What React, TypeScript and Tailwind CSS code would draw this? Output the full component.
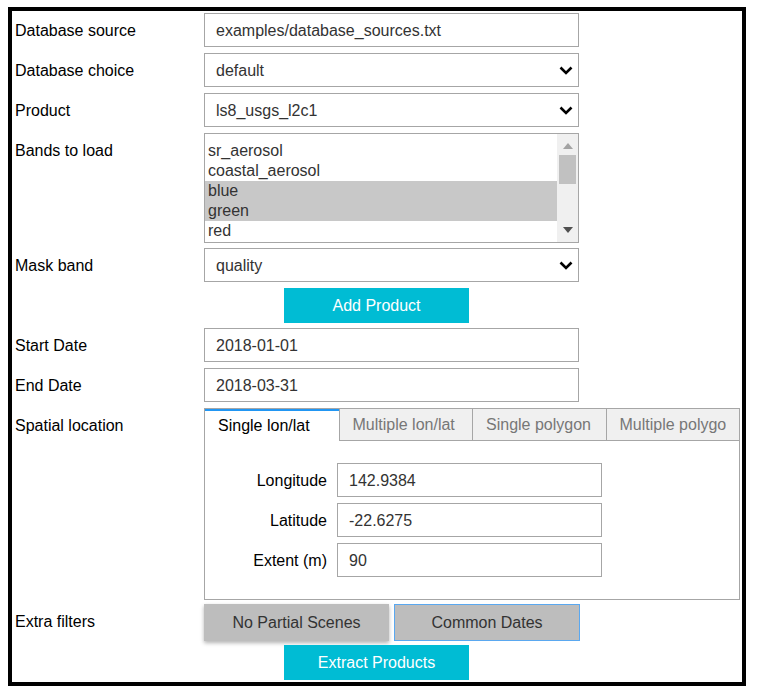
import React from "react";

const font = "font-['Liberation_Sans',Arial,sans-serif]";

function Chevron() {
  return (
    <svg width="14" height="9" viewBox="0 0 14 9" className="shrink-0">
      <path d="M1.5 1.5 L7 7 L12.5 1.5" fill="none" stroke="#000" strokeWidth="2.6" />
    </svg>
  );
}

function Row({ label, className, children }: { label?: string; className?: string; children: React.ReactNode }) {
  return (
    <div className={"flex " + (className ?? "")}>
      <div className="flex h-[34px] w-[189px] shrink-0 items-center pt-[1px] text-black">{label}</div>
      {children}
    </div>
  );
}

function TextBox({ value, width = "w-[375px]" }: { value: string; width?: string }) {
  return (
    <div className={`flex h-[34px] ${width} items-center border border-[#a6a6a6] bg-white pl-[11px] pt-[1px] text-[#333]`}>
      {value}
    </div>
  );
}

function SelectBox({ value }: { value: string }) {
  return (
    <div className="flex h-[34px] w-[375px] items-center justify-between border border-[#a6a6a6] bg-white pl-[11px] pr-[5px] text-[#333]">
      <span className="pt-[1px]">{value}</span>
      <Chevron />
    </div>
  );
}

function CyanButton({ text }: { text: string }) {
  return (
    <div className="ml-[80px] flex h-[35px] w-[185px] items-center justify-center bg-[#00bcd4] text-white">
      {text}
    </div>
  );
}

const bands = [
  { name: "sr_aerosol", sel: false },
  { name: "coastal_aerosol", sel: false },
  { name: "blue", sel: true },
  { name: "green", sel: true },
  { name: "red", sel: false },
];

export default function App() {
  const tabs = ["Single lon/lat", "Multiple lon/lat", "Single polygon", "Multiple polygon"];

  return (
    <div className={`${font} bg-white pl-[8px] pt-[7px] text-[16px] leading-[20px]`}>
      <div className="flex h-[679px] w-[738px] flex-col border-4 border-black pl-[3px] pt-[2px]">
        <Row label="Database source">
          <TextBox value="examples/database_sources.txt" />
        </Row>
        <Row label="Database choice" className="mt-[6px]">
          <SelectBox value="default" />
        </Row>
        <Row label="Product" className="mt-[6px]">
          <SelectBox value="ls8_usgs_l2c1" />
        </Row>

        {/* Bands list */}
        <Row label="Bands to load" className="mt-[6px]">
          <div className="flex h-[110px] w-[375px] border border-[#a6a6a6] bg-white">
            <div className="flex-1 overflow-hidden pt-[7px] text-[#333]">
              {bands.map((b) => (
                <div key={b.name} className={"h-[20px] pl-[3px] " + (b.sel ? "bg-[#c8c8c8]" : "")}>
                  {b.name}
                </div>
              ))}
            </div>
            <div className="flex w-[21px] flex-col items-center bg-[#f0f0f0] pt-[9px]">
              <svg width="10" height="6" viewBox="0 0 10 6">
                <path d="M0 6 L5 0 L10 6 Z" fill="#a3a3a3" />
              </svg>
              <div className="mt-[6px] h-[29px] w-[17px] bg-[#c1c1c1]" />
              <div className="flex-1" />
              <svg width="10" height="6" viewBox="0 0 10 6" className="mb-[9px]">
                <path d="M0 0 L10 0 L5 6 Z" fill="#505050" />
              </svg>
            </div>
          </div>
        </Row>

        <Row label="Mask band" className="mt-[5px]">
          <SelectBox value="quality" />
        </Row>
        <Row className="mt-[6px]">
          <CyanButton text="Add Product" />
        </Row>
        <Row label="Start Date" className="mt-[5px]">
          <TextBox value="2018-01-01" />
        </Row>
        <Row label="End Date" className="mt-[6px]">
          <TextBox value="2018-03-31" />
        </Row>

        {/* Spatial tabs */}
        <Row label="Spatial location" className="mt-[6px]">
          <div className="h-[192px] w-[536px] border border-[#a6a6a6] bg-white">
            <div className="flex h-[32px]">
              {tabs.map((t, i) => (
                <div
                  key={t}
                  className={
                    "flex w-[134px] items-center whitespace-nowrap pl-[13px] " +
                    (i === 0
                      ? "border-t-2 border-[#2196f3] bg-white text-black"
                      : "border-b border-l border-[#a6a6a6] bg-[#f0f0f0] pt-[1px] text-[#777]")
                  }
                >
                  <span className="block w-[106px] overflow-hidden">{t}</span>
                </div>
              ))}
            </div>
            <div className="flex flex-col gap-[6px] pt-[22px]">
              {[
                ["Longitude", "142.9384"],
                ["Latitude", "-22.6275"],
                ["Extent (m)", "90"],
              ].map(([l, v]) => (
                <div key={l} className="flex items-center">
                  <div className="w-[122px] pt-[1px] text-right text-black">{l}</div>
                  <div className="ml-[10px]">
                    <TextBox value={v} width="w-[265px]" />
                  </div>
                </div>
              ))}
            </div>
          </div>
        </Row>

        {/* Extra filters */}
        <Row label="Extra filters" className="mt-[4px]">
          <div className="flex h-[37px] gap-[5px]">
            <div className="flex w-[185px] items-center justify-center bg-[#bdbdbd] text-[#333] shadow-[0_2px_4px_rgba(0,0,0,0.3)]">
              No Partial Scenes
            </div>
            <div className="flex w-[186px] items-center justify-center border border-[#5aa8f0] bg-[#bdbdbd] text-[#333]">
              Common Dates
            </div>
          </div>
        </Row>
        <Row className="mt-[4px]">
          <CyanButton text="Extract Products" />
        </Row>
      </div>
    </div>
  );
}
